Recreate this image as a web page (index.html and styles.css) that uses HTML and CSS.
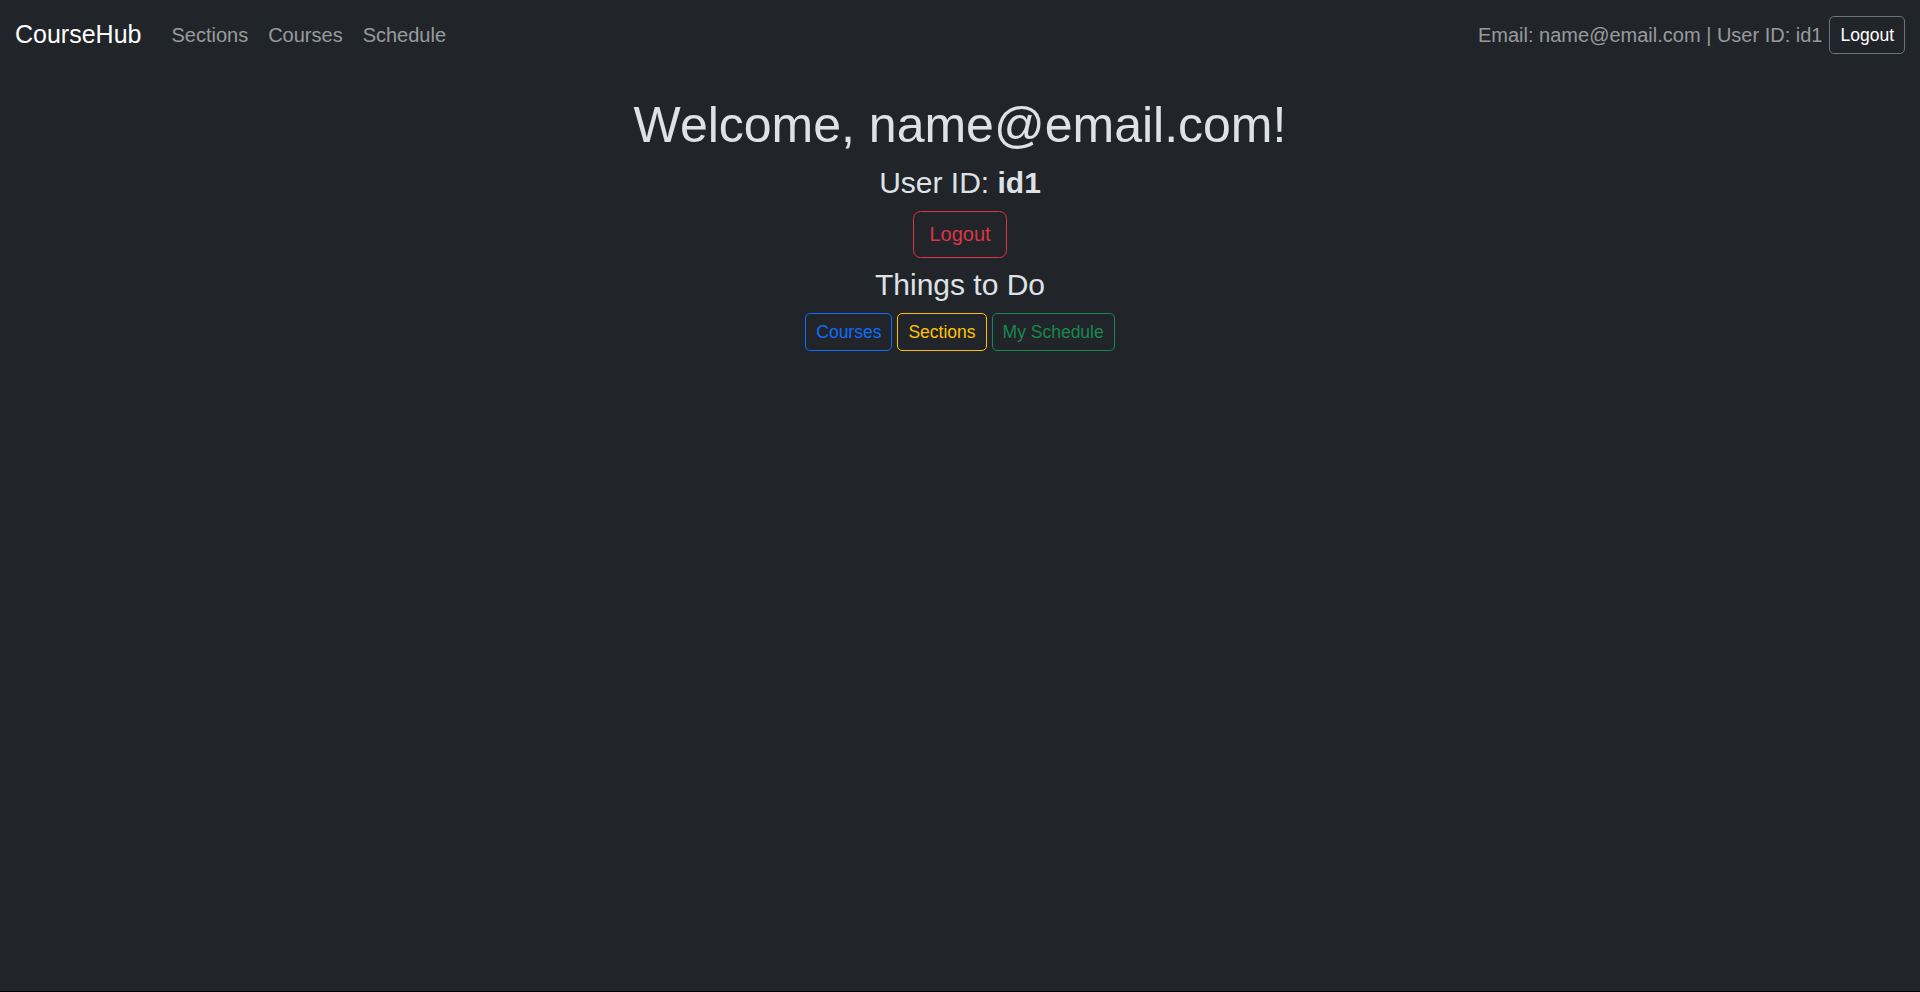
FILE: index.html
```html
<!DOCTYPE html>
<html lang="en">
<head>
<meta charset="utf-8">
<title>CourseHub</title>
<link rel="stylesheet" href="styles.css">
</head>
<body>
<div class="page">
  <nav class="navbar">
    <div class="nav-left">
      <a class="brand" href="#">CourseHub</a>
      <a class="nav-link" href="#">Sections</a>
      <a class="nav-link" href="#">Courses</a>
      <a class="nav-link" href="#">Schedule</a>
    </div>
    <div class="nav-right">
      <span class="nav-text">Email: name@email.com | User ID: id1</span>
      <button class="btn btn-sm btn-nav">Logout</button>
    </div>
  </nav>
  <main class="main">
    <h1 class="title">Welcome, name@email.com!</h1>
    <h4 class="sub">User ID: <strong>id1</strong></h4>
    <button class="btn btn-danger">Logout</button>
    <h4 class="sub todo">Things to Do</h4>
    <div class="actions">
      <button class="btn btn-sm btn-primary">Courses</button>
      <button class="btn btn-sm btn-warning">Sections</button>
      <button class="btn btn-sm btn-success">My Schedule</button>
    </div>
  </main>
</div>
</body>
</html>
```
FILE: styles.css
```css
html {
  background: #000;
}
body {
  margin: 0;
  font-family: "Liberation Sans", Arial, sans-serif;
  font-size: 20px;
  line-height: 1.5;
  color: #dee2e6;
}
.page {
  height: 991px;
  background: #212529;
}
.navbar {
  display: flex;
  justify-content: space-between;
  align-items: center;
  padding: 10px 15px;
  height: 50px;
}
.nav-left, .nav-right {
  display: flex;
  align-items: center;
}
.brand {
  color: #fff;
  text-decoration: none;
  font-size: 25px;
  line-height: 37.5px;
  padding: 6.25px 0;
  margin-right: 20px;
}
.nav-link {
  color: rgba(255, 255, 255, 0.55);
  text-decoration: none;
  padding: 10px 10px;
  line-height: 30px;
}
.nav-text {
  color: rgba(255, 255, 255, 0.55);
  margin-right: 7px;
}
.btn {
  font-family: inherit;
  background: transparent;
  border: 1px solid;
  font-size: 20px;
  line-height: 30px;
  padding: 7.5px 15px;
  border-radius: 7.5px;
  cursor: pointer;
}
.btn-sm {
  font-size: 17.5px;
  line-height: 26.25px;
  padding: 5px 10px;
  border-radius: 5px;
}
.btn-nav {
  color: #fff;
  border-color: #6c757d;
}
.btn-danger {
  color: #dc3545;
  border-color: #dc3545;
}
.btn-primary {
  color: #0d6efd;
  border-color: #0d6efd;
}
.btn-warning {
  color: #ffc107;
  border-color: #ffc107;
}
.btn-success {
  color: #198754;
  border-color: #198754;
}
.main {
  display: flex;
  flex-direction: column;
  align-items: center;
  padding-top: 24.5px;
}
.title {
  font-size: 50px;
  font-weight: 500;
  line-height: 1.2;
  margin: 0 0 10px;
}
.sub {
  font-size: 30px;
  font-weight: 500;
  line-height: 1.2;
  margin: 0 0 10px;
}
.sub strong {
  font-weight: 700;
}
.todo {
  margin-top: 9px;
}
.actions {
  display: flex;
  gap: 5px;
}
```
